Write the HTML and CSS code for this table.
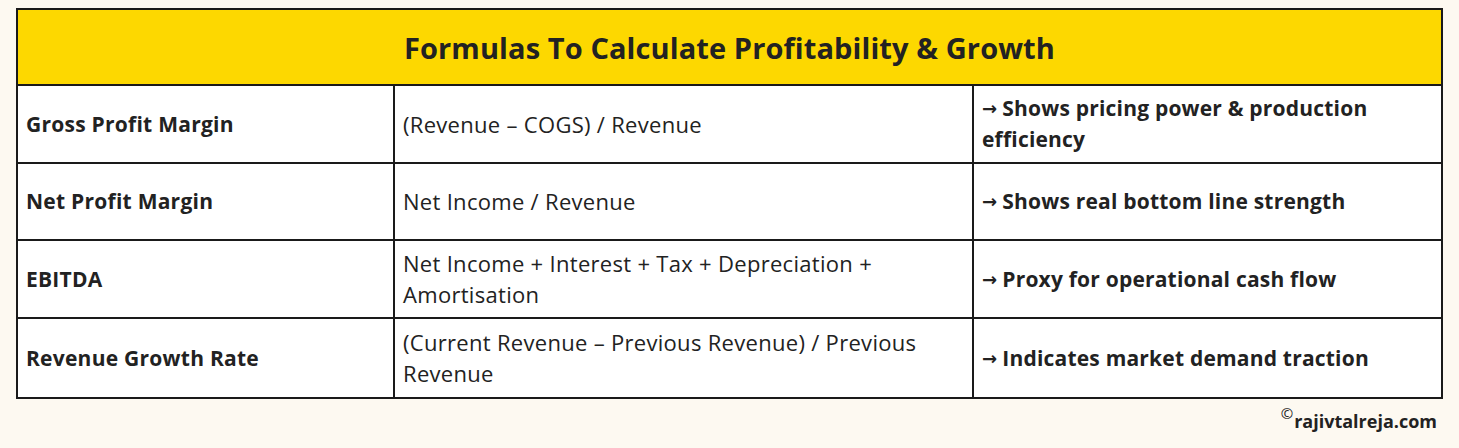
FILE: index.html
```html
<!DOCTYPE html>
<html>
<head>
<meta charset="utf-8">
<link rel="stylesheet" href="styles.css">
</head>
<body>
<div class="page">
  <div class="table">
    <div class="title">Formulas To Calculate Profitability &amp; Growth</div>
    <div class="cell name">Gross Profit Margin</div>
    <div class="cell formula">(Revenue – COGS) / Revenue</div>
    <div class="cell note"><p class="txt">Shows pricing power &amp; production efficiency</p></div>
    <div class="cell name">Net Profit Margin</div>
    <div class="cell formula">Net Income / Revenue</div>
    <div class="cell note"><p class="txt">Shows real bottom line strength</p></div>
    <div class="cell name">EBITDA</div>
    <div class="cell formula">Net Income + Interest + Tax + Depreciation + Amortisation</div>
    <div class="cell note"><p class="txt">Proxy for operational cash flow</p></div>
    <div class="cell name last">Revenue Growth Rate</div>
    <div class="cell formula last">(Current Revenue – Previous Revenue) / Previous Revenue</div>
    <div class="cell note last"><p class="txt">Indicates market demand traction</p></div>
  </div>
  <div class="footer"><span class="copy">©</span>rajivtalreja.com</div>
</div>
</body>
</html>
```
FILE: styles.css
```css
html, body {
  margin: 0;
  padding: 0;
  background: #fdf9f1;
}
.page {
  width: 1459px;
  height: 448px;
  padding: 8px 16px 0 16px;
  box-sizing: border-box;
  font-family: "Open Sans", "Liberation Sans", sans-serif;
  color: #222;
}
.table {
  display: grid;
  grid-template-columns: 377px 579px 1fr;
  grid-template-rows: 76px 78px 77px 78px 78px;
  border: 2px solid #1a1a1a;
  background: #fff;
}
.title {
  grid-column: 1 / 4;
  background: #fdd800;
  display: flex;
  align-items: center;
  justify-content: center;
  font-size: 29px;
  font-weight: 700;
  border-bottom: 2px solid #1a1a1a;
  letter-spacing: 0.1px;
}
.cell {
  display: flex;
  align-items: center;
  padding: 0 8px;
  line-height: 31px;
  border-bottom: 2px solid #1a1a1a;
}
.cell.last {
  border-bottom: none;
}
.name {
  font-size: 21px;
  letter-spacing: 0.25px;
  font-weight: 700;
  border-right: 2px solid #1a1a1a;
}
.formula {
  font-size: 22px;
  letter-spacing: 0.3px;
  font-weight: 400;
  border-right: 2px solid #1a1a1a;
  padding-right: 40px;
}
.note {
  font-size: 21px;
  letter-spacing: 0.2px;
  font-weight: 700;
  padding-right: 60px;
}
.txt {
  margin: 0;
}
.txt::before {
  content: "→";
  font-family: "DejaVu Sans", sans-serif;
  font-size: 18px;
  line-height: 1;
  font-weight: 700;
  vertical-align: 1px;
  margin-right: 5px;
}
.footer {
  text-align: right;
  padding-right: 6px;
  padding-top: 10px;
  font-size: 18px;
  font-weight: 700;
}
.copy {
  font-size: 15px;
  font-weight: 400;
  position: relative;
  top: -9px;
  margin-right: 1px;
}
```
